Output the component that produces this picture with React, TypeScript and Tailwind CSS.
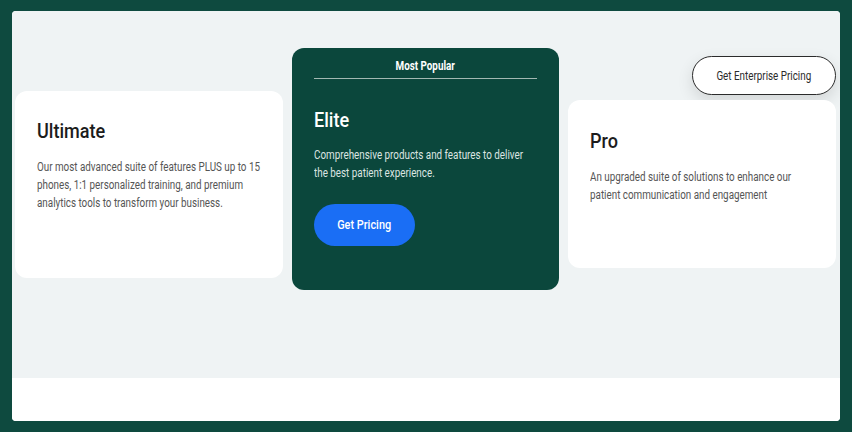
import React from 'react';

// the site font is a condensed grotesque; Roboto squeezed horizontally stands in for it
const squeeze = 'inline-block whitespace-nowrap origin-left scale-x-[0.82]';

interface PlanCardProps {
  title: string;
  description: string[];
  className?: string;
}

const PlanCard: React.FC<PlanCardProps> = ({ title, description, className }) => (
  <div className={`w-[268px] rounded-[12px] bg-white px-[22px] ${className ?? ''}`}>
    <h3 className="text-[21px] leading-[24px] font-medium text-[#1c1c1c]">
      <span className="inline-block whitespace-nowrap origin-left scale-x-[0.86]">{title}</span>
    </h3>
    <p className="mt-[15px] text-[12px] leading-[18px] text-[#555]">
      {description.map((line) => (
        <span key={line} className="block h-[18px]">
          <span className={squeeze}>{line}</span>
        </span>
      ))}
    </p>
  </div>
);

export default function App() {
  return (
    <div className="w-[852px] h-[432px] bg-[#0e4a3f] px-[12px] py-[11px] [font-family:Roboto,'Liberation_Sans',sans-serif]">
      <div className="h-full flex flex-col rounded-[4px] overflow-hidden bg-white">
        {/* plans */}
        <div className="h-[367px] bg-[#eff3f4] flex items-start gap-[9px] pl-[3px]">
          <PlanCard
            title="Ultimate"
            className="mt-[80px] h-[187px] pt-[28px]"
            description={[
              'Our most advanced suite of features PLUS up to 15',
              'phones, 1:1 personalized training, and premium',
              'analytics tools to transform your business.',
            ]}
          />

          <div className="mt-[37px] w-[267px] h-[242px] rounded-[12px] bg-[#0b473c] px-[22px] text-white">
            <div className="pt-[10px] pb-[4px] border-b border-[#a3b8b2] text-center text-[12px] leading-[16px] font-bold">
              <span className="inline-block whitespace-nowrap scale-x-[0.82]">Most Popular</span>
            </div>
            <h3 className="mt-[29px] text-[21px] leading-[24px] font-medium">
              <span className="inline-block origin-left scale-x-[0.86]">Elite</span>
            </h3>
            <p className="mt-[14px] text-[12px] leading-[18px] text-[#dce5e2]">
              <span className="block h-[18px]">
                <span className={squeeze}>Comprehensive products and features to deliver</span>
              </span>
              <span className="block h-[18px]">
                <span className={squeeze}>the best patient experience.</span>
              </span>
            </p>
            <button className="mt-[22px] w-[101px] h-[42px] rounded-full bg-[#1a6ef5] text-[13px] font-medium text-white">
              <span className="inline-block whitespace-nowrap scale-x-[0.84]">Get Pricing</span>
            </button>
          </div>

          <div className="mt-[45px] flex flex-col items-end">
            <button className="w-[144px] h-[39px] rounded-full border-[1.5px] border-[#2b2b2b] bg-white text-[12px] text-[#2b2b2b] shadow-[0_6px_16px_rgba(0,0,0,0.12)]">
              <span className="inline-block whitespace-nowrap scale-x-[0.82]">Get Enterprise Pricing</span>
            </button>
            <PlanCard
              title="Pro"
              className="mt-[5px] h-[168px] pt-[29px]"
              description={[
                'An upgraded suite of solutions to enhance our',
                'patient communication and engagement',
              ]}
            />
          </div>
        </div>
        <div className="flex-1 bg-white" />
      </div>
    </div>
  );
}
